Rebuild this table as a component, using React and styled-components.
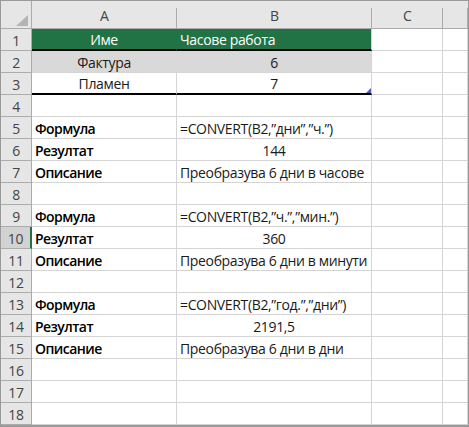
import React from "react";
import styled, { createGlobalStyle } from "styled-components";

const GlobalStyle = createGlobalStyle`
  * { box-sizing: border-box; }
  body {
    margin: 0;
    background: #ffffff;
    font-family: "Open Sans", "Noto Sans", sans-serif;
  }
`;

const GREEN = "#217346";
const GRID = "#d4d4d4";
const HEAD_LINE = "#ababab";

const Sheet = styled.div`
  width: 469px;
  display: grid;
  grid-template-columns: 31px 145px 195px 71px 1fr;
  grid-template-rows: 28px;
  grid-auto-rows: 22px;
  border: 1px solid #9a9a9a;
  border-bottom-width: 2px;
  background: #ffffff;
`;

const Corner = styled.div`
  position: relative;
  background: #e6e6e6;
  border-right: 1px solid ${HEAD_LINE};
  border-bottom: 1px solid ${HEAD_LINE};
  &::after {
    content: "";
    position: absolute;
    right: 3px;
    bottom: 2px;
    width: 0;
    height: 0;
    border-left: 12px solid transparent;
    border-bottom: 11px solid #b4b4b4;
  }
`;

const ColHead = styled.div`
  position: relative;
  display: flex;
  align-items: flex-end;
  justify-content: center;
  padding-bottom: 3px;
  background: #e6e6e6;
  border-bottom: 1px solid ${HEAD_LINE};
  color: #444444;
  font-size: 14px;
  &::after {
    content: "";
    position: absolute;
    right: 0;
    top: 7px;
    bottom: 0;
    width: 1px;
    background: ${HEAD_LINE};
  }
`;

const RowHead = styled.div`
  display: flex;
  align-items: center;
  justify-content: center;
  padding-top: 1px;
  background: ${(p) => (p.$active ? "#d2d2d2" : "#e6e6e6")};
  border-right: ${(p) => (p.$active ? `2px solid ${GREEN}` : `1px solid ${HEAD_LINE}`)};
  border-bottom: 1px solid ${HEAD_LINE};
  color: #444444;
  font-size: 14px;
  letter-spacing: -0.3px;
`;

const Cell = styled.div`
  position: relative;
  display: flex;
  align-items: center;
  justify-content: ${(p) => (p.$align === "center" ? "center" : "flex-start")};
  padding: 1px 3px 0 3px;
  background: ${(p) => p.$bg || "#ffffff"};
  border-right: 1px solid ${(p) => (p.$fill ? p.$bg : GRID)};
  border-bottom: ${(p) => (p.$rule ? "2px solid #000000" : `1px solid ${GRID}`)};
  color: ${(p) => p.$color || "#1a1a1a"};
  font-size: 14px;
  letter-spacing: ${(p) => (p.$strong ? "-0.55px" : "-0.35px")};
  font-weight: ${(p) => (p.$strong ? 600 : 400)};
  white-space: nowrap;
`;

const Handle = styled.span`
  position: absolute;
  right: 0;
  bottom: 0;
  width: 0;
  height: 0;
  border-left: 5px solid transparent;
  border-bottom: 5px solid #4a5fc1;
`;

const Q = "\u201d";

const rows = [
  { a: "Име", b: "Часове работа", header: true },
  { a: "Фактура", b: "6", band: true },
  { a: "Пламен", b: "7", last: true },
  {},
  { a: "Формула", b: `=CONVERT(B2,${Q}дни${Q},${Q}ч.${Q})` },
  { a: "Резултат", b: "144", center: true },
  { a: "Описание", b: "Преобразува 6 дни в часове" },
  {},
  { a: "Формула", b: `=CONVERT(B2,${Q}ч.${Q},${Q}мин.${Q})` },
  { a: "Резултат", b: "360", center: true },
  { a: "Описание", b: "Преобразува 6 дни в минути" },
  {},
  { a: "Формула", b: `=CONVERT(B2,${Q}год.${Q},${Q}дни${Q})` },
  { a: "Резултат", b: "2191,5", center: true },
  { a: "Описание", b: "Преобразува 6 дни в дни" },
  {},
  {},
  {},
];

function TableRow({ row }) {
  if (row.header) {
    return (
      <>
        <Cell $align="center" $bg={GREEN} $fill $color="#ffffff" $rule>
          {row.a}
        </Cell>
        <Cell $bg={GREEN} $color="#ffffff" $rule>
          {row.b}
        </Cell>
      </>
    );
  }
  if (row.band) {
    return (
      <>
        <Cell $align="center" $bg="#d9d9d9" $fill>
          {row.a}
        </Cell>
        <Cell $align="center" $bg="#d9d9d9">
          {row.b}
        </Cell>
      </>
    );
  }
  if (row.last) {
    return (
      <>
        <Cell $align="center" $rule>
          {row.a}
        </Cell>
        <Cell $align="center" $rule>
          {row.b}
          <Handle />
        </Cell>
      </>
    );
  }
  return (
    <>
      <Cell $strong $color="#000000">
        {row.a}
      </Cell>
      <Cell $align={row.center ? "center" : "left"}>{row.b}</Cell>
    </>
  );
}

export default function App() {
  return (
    <>
      <GlobalStyle />
      <Sheet>
        <Corner />
        <ColHead>A</ColHead>
        <ColHead>B</ColHead>
        <ColHead>C</ColHead>
        <ColHead />
        {rows.map((row, i) => (
          <React.Fragment key={i}>
            <RowHead $active={i === 9}>{i + 1}</RowHead>
            <TableRow row={row} />
            <Cell />
            <Cell />
          </React.Fragment>
        ))}
      </Sheet>
    </>
  );
}
